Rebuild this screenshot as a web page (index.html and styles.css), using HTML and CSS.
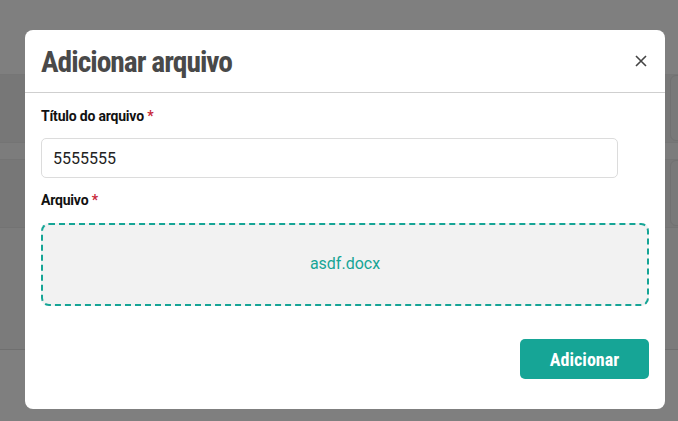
FILE: index.html
```html
<!DOCTYPE html>
<html lang="pt">
<head>
<meta charset="utf-8">
<link rel="stylesheet" href="styles.css">
<title>Adicionar arquivo</title>
</head>
<body>
<div class="page">
  <div class="band band-top"></div>
  <div class="band band-a"><div class="card"></div></div>
  <div class="band band-gap"></div>
  <div class="band band-b"><div class="card"></div></div>
  <div class="band band-c"></div>
  <div class="band band-d"></div>
</div>
<div class="overlay">
  <div class="modal">
    <div class="modal-header">
      <h1 class="modal-title">Adicionar arquivo</h1>
      <button class="close" aria-label="Fechar">
        <svg width="12" height="12" viewBox="0 0 12 12"><path d="M1 1L11 11M11 1L1 11" stroke="#444" stroke-width="1.6" fill="none"/></svg>
      </button>
    </div>
    <div class="modal-body">
      <label class="label">Título do arquivo <span class="req">*</span></label>
      <div class="input">5555555</div>
      <label class="label">Arquivo <span class="req">*</span></label>
      <div class="dropzone">asdf.docx</div>
      <div class="actions">
        <button class="btn">Adicionar</button>
      </div>
    </div>
  </div>
</div>
</body>
</html>
```

FILE: styles.css
```css
* { box-sizing: border-box; }
html, body { margin: 0; padding: 0; }
body {
  width: 678px;
  height: 421px;
  overflow: hidden;
  position: relative;
  background: #7f7f7f;
  font-family: Roboto, "Liberation Sans", sans-serif;
}
.page { display: flex; flex-direction: column; height: 421px; }
.band { position: relative; }
.band-top { height: 75px; background: #7f7f7f; border-bottom: 1px solid #767676; }
.band-a { height: 67px; background: #777777; }
.band-gap { height: 18px; background: #7c7c7c; border-top: 1px solid #747474; border-bottom: 1px solid #747474; }
.band-b { height: 67px; background: #777777; }
.band-c { height: 123px; background: #7b7b7b; border-top: 1px solid #737373; border-bottom: 1px solid #6f6f6f; }
.band-d { flex: 1; background: #7f7f7f; }
.card {
  position: absolute;
  right: -10px;
  top: 0;
  width: 18px;
  height: 66px;
  border: 1px solid #717171;
  border-radius: 6px;
  background: #797979;
}
.overlay {
  position: absolute;
  inset: 0;
  padding: 30px 13px 12px 25px;
}
.modal {
  width: 640px;
  height: 379px;
  background: #fff;
  border-radius: 8px;
  display: flex;
  flex-direction: column;
}
.modal-header {
  height: 63px;
  border-bottom: 1px solid #cfcfcf;
  display: flex;
  align-items: center;
  justify-content: space-between;
  padding: 0 18px 0 16px;
}
.modal-title {
  margin: 0;
  font-family: "Roboto Condensed", "DejaVu Sans Condensed", sans-serif;
  font-weight: 700;
  font-size: 29.5px;
  color: #494949;
  letter-spacing: -1px;
  padding-top: 2px;
}
.close {
  border: 0;
  background: none;
  padding: 0;
  width: 12px;
  height: 12px;
  display: flex;
}
.modal-body {
  padding: 14px 16px 0 16px;
  display: flex;
  flex-direction: column;
}
.label {
  font-size: 14px;
  font-weight: 700;
  color: #111;
  line-height: 18px;
  letter-spacing: -0.2px;
}
.req { color: #c8283a; }
.input {
  margin-top: 13px;
  width: 577px;
  height: 40px;
  border: 1px solid #dcdcdc;
  border-radius: 5px;
  padding: 0 11px;
  display: flex;
  align-items: center;
  font-size: 16px;
  color: #222;
  margin-bottom: 13px;
}
.dropzone {
  margin-top: 14px;
  width: 608px;
  height: 83px;
  border: 2px dashed #16a596;
  border-radius: 8px;
  background: #f2f2f2;
  display: flex;
  align-items: center;
  justify-content: center;
  color: #16a596;
  font-size: 16px;
  padding-bottom: 2px;
}
.actions {
  display: flex;
  justify-content: flex-end;
  margin-top: 33px;
}
.btn {
  width: 129px;
  height: 40px;
  border: 0;
  border-radius: 5px;
  background: #16a596;
  color: #fff;
  font-family: "Roboto Condensed", "DejaVu Sans Condensed", sans-serif;
  font-weight: 700;
  font-size: 18px;
}
```
